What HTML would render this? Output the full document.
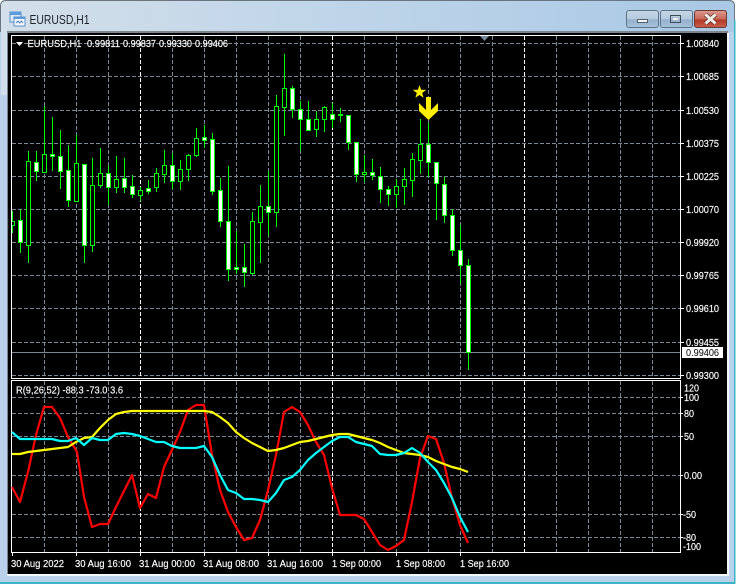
<!DOCTYPE html>
<html><head><meta charset="utf-8"><title>EURUSD,H1</title>
<style>
html,body{margin:0;padding:0;background:#fff;overflow:hidden}
svg{display:block}
text{font-family:"Liberation Sans",sans-serif;font-size:10px;fill:#fff;stroke:#fff;stroke-width:.15}
</style></head><body>
<svg width="738" height="584" viewBox="0 0 738 584" xmlns="http://www.w3.org/2000/svg">
<defs>
<linearGradient id="tb" x1="0" x2="1" y1="0" y2="0"><stop offset="0" stop-color="#d3dfe9"/><stop offset=".45" stop-color="#bfd5e9"/><stop offset="1" stop-color="#a9c8e5"/></linearGradient>
<linearGradient id="btn" x1="0" x2="0" y1="0" y2="1"><stop offset="0" stop-color="#c6d6e6"/><stop offset=".5" stop-color="#b4c9de"/><stop offset=".55" stop-color="#94b0cd"/><stop offset="1" stop-color="#a9c3dc"/></linearGradient>
<linearGradient id="cls" x1="0" x2="0" y1="0" y2="1"><stop offset="0" stop-color="#dc9a8e"/><stop offset=".5" stop-color="#c9685a"/><stop offset=".55" stop-color="#b23a28"/><stop offset="1" stop-color="#c8604a"/></linearGradient>
<clipPath id="mc"><rect x="12" y="36" width="668" height="342"/></clipPath>
</defs>
<rect width="738" height="584" fill="#fff"/>
<path d="M0 584V6Q0 0 6 0H729Q735 0 735 6V584Z" fill="#b9d1ea"/>
<path d="M.5 32V6Q.5 .5 6 .5H729Q734.500 .5 734.500 6V32" fill="url(#tb)" stroke="#6a7580" stroke-width="1"/>
<rect x="1" y="95" width="5" height="480" fill="#b9d1ea"/>
<rect x="1" y="32" width="6" height="63" fill="#d2e0ee"/>
<rect x="729" y="32" width="5" height="550" fill="#b9d1ea"/>
<rect x="0" y="582" width="735" height="2" fill="#3cb4c4"/>
<rect x="734" y="20" width="1.500" height="564" fill="#3cb4c4"/>
<!-- title icon -->
<g shape-rendering="crispEdges">
<rect x="10" y="12" width="11" height="10" fill="#dbe9f7" stroke="#5c8fc7"/>
<rect x="10" y="12" width="11" height="3" fill="#5c9ae0"/>
<rect x="14" y="17" width="11" height="9" fill="#f4f9fe" stroke="#5c8fc7"/>
<rect x="14" y="17" width="11" height="2" fill="#5c9ae0"/>
</g>
<path d="M16 23l2-2 1.500 2 2-2 1.500 2" fill="none" stroke="#4a7fbd" stroke-width="1"/>
<text x="29.500" y="24" textLength="60" lengthAdjust="spacingAndGlyphs" style="font-size:13px;fill:#20262c;stroke:none">EURUSD,H1</text>
<!-- buttons -->
<rect x="626.500" y="10.500" width="32" height="17" rx="2.500" fill="url(#btn)" stroke="#5f7387"/>
<rect x="660.500" y="10.500" width="32" height="17" rx="2.500" fill="url(#btn)" stroke="#5f7387"/>
<rect x="694.500" y="10.500" width="32" height="17" rx="2.500" fill="url(#cls)" stroke="#6b3a34"/>
<rect x="637.500" y="19.500" width="10" height="3" fill="#f2f5f8" stroke="#51606e"/>
<rect x="670.500" y="15.500" width="10" height="7" fill="none" stroke="#3f4d5b"/>
<rect x="672.500" y="17.500" width="6" height="3" fill="#eef2f6" stroke="#8a9aa9" stroke-width=".5"/>
<path d="M705.500 14.500L715.500 23.500M715.500 14.500L705.500 23.500" stroke="#5b2a24" stroke-width="4.500" fill="none"/>
<path d="M705.500 14.500L715.500 23.500M715.500 14.500L705.500 23.500" stroke="#f1ece8" stroke-width="3" fill="none"/>
<!-- canvas -->
<rect x="7" y="31" width="721" height="2" fill="#7d858c"/>
<rect x="7" y="31" width="1" height="544" fill="#7d858c"/>
<rect x="8" y="33" width="719" height="541" fill="#000"/>
<rect x="7" y="574" width="721" height="2" fill="#f4f7fa"/>
<rect x="727" y="33" width="2" height="543" fill="#f4f7fa"/>
<!-- grid -->
<g shape-rendering="crispEdges" fill="none" stroke-dasharray="4 2">
<path stroke="#778899" d="M12 43.500H680M12 76.500H680M12 110.500H680M12 143.500H680M12 176.500H680M12 209.500H680M12 242.500H680M12 275.500H680M12 308.500H680M12 342.500H680M12 375.500H680M12 397.500H680M12 413.500H680M12 436.500H680M12 475.500H680M12 514.500H680M12 537.500H680"/>
<path stroke="#778899" d="M44.500 36V378M76.500 36V378M108.500 36V378M172.500 36V378M204.500 36V378M236.500 36V378M268.500 36V378M300.500 36V378M364.500 36V378M396.500 36V378M428.500 36V378M460.500 36V378M492.500 36V378M556.500 36V378M588.500 36V378M620.500 36V378M652.500 36V378M44.500 381V552M76.500 381V552M108.500 381V552M172.500 381V552M204.500 381V552M236.500 381V552M268.500 381V552M300.500 381V552M364.500 381V552M396.500 381V552M428.500 381V552M460.500 381V552M492.500 381V552M556.500 381V552M588.500 381V552M620.500 381V552M652.500 381V552"/>
<path stroke="#fff" d="M140.500 36V378M332.500 36V378M524.500 36V378M140.500 381V552M332.500 381V552M524.500 381V552"/>
</g>
<path d="M12 352.500H681" stroke="#778899" shape-rendering="crispEdges"/>
<!-- candles -->
<g clip-path="url(#mc)" shape-rendering="crispEdges" stroke="#00ff00" stroke-width="1">
<path fill="none" d="M12.500 211V233M20.500 209V253M28.500 151V263M36.500 151V181M44.500 106V172M52.500 117V171M60.500 130V189M68.500 145V207M76.500 135V202M84.500 164V263M92.500 158V252M100.500 148V188M108.500 166V205M116.500 156V193M124.500 158V193M132.500 175V198M140.500 187V201M148.500 180V194M156.500 168V192M164.500 150V183M172.500 153V189M180.500 160V190M188.500 154V181M196.500 128V157M204.500 125V148M212.500 133V195M220.500 178V227M228.500 166V281M236.500 231V274M244.500 244V287M252.500 212V275M260.500 185V263M268.500 171V236M276.500 95V227M284.500 54V136M292.500 86V118M300.500 101V151M308.500 101V131M316.500 111V137M324.500 106V132M332.500 103V128M340.500 108V122M348.500 115V150M356.500 142V182M364.500 155V182M372.500 159V180M380.500 167V203M388.500 186V206M396.500 179V208M404.500 168V205M412.500 153V197M420.500 119V174M428.500 123V177M436.500 162V220M444.500 177V223M452.500 209V256M460.500 225V284M468.500 259V370"/>
<path fill="#000" d="M10.500 221.500h4v4h-4zM26.500 161.500h4v84h-4zM42.500 154.500h4v18h-4zM74.500 163.500h4v38h-4zM90.500 185.500h4v60h-4zM98.500 173.500h4v12h-4zM114.500 179.500h4v8h-4zM138.500 190.500h4v5h-4zM154.500 173.500h4v14h-4zM162.500 165.500h4v9h-4zM178.500 169.500h4v12h-4zM186.500 155.500h4v14h-4zM194.500 138.500h4v17h-4zM250.500 221.500h4v52h-4zM258.500 206.500h4v16h-4zM274.500 106.500h4v106h-4zM282.500 88.500h4v19h-4zM314.500 119.500h4v10h-4zM322.500 107.500h4v12h-4zM338.500 114.500h4v1h-4zM362.500 172.500h4v2h-4zM394.500 186.500h4v8h-4zM402.500 179.500h4v7h-4zM410.500 159.500h4v21h-4zM418.500 144.500h4v16h-4z"/>
<path fill="#fff" d="M18.500 220.500h4v22h-4zM34.500 162.500h4v9h-4zM50.500 154.500h4v2h-4zM58.500 156.500h4v15h-4zM66.500 170.500h4v30h-4zM82.500 164.500h4v81h-4zM106.500 173.500h4v14h-4zM122.500 178.500h4v9h-4zM130.500 186.500h4v8h-4zM146.500 188.500h4v3h-4zM170.500 165.500h4v16h-4zM202.500 137.500h4v3h-4zM210.500 139.500h4v52h-4zM218.500 190.500h4v31h-4zM226.500 221.500h4v48h-4zM234.500 267.500h4v2h-4zM242.500 267.500h4v5h-4zM266.500 206.500h4v6h-4zM290.500 88.500h4v21h-4zM298.500 109.500h4v10h-4zM306.500 119.500h4v11h-4zM330.500 114.500h4v5h-4zM346.500 115.500h4v27h-4zM354.500 142.500h4v32h-4zM370.500 172.500h4v3h-4zM378.500 176.500h4v13h-4zM386.500 189.500h4v5h-4zM426.500 144.500h4v18h-4zM434.500 162.500h4v21h-4zM442.500 184.500h4v31h-4zM450.500 215.500h4v35h-4zM458.500 250.500h4v15h-4zM466.500 265.500h4v87h-4z"/>
</g>
<!-- objects -->
<polygon points="419.500,85 421.100,89.800 426.200,89.900 422.200,93 423.600,97.800 419.500,95 415.400,97.800 416.800,93 412.800,89.900 417.900,89.800" fill="#ffee00"/>
<polygon points="426,97 431,97 431,110 438,103 438,111 428.500,120 419,111 419,103 426,110" fill="#ffee00"/>
<polygon points="480,36 489,36 484.500,41" fill="#778899"/>
<polygon points="16,42 23,42 19.500,46" fill="#fff"/>
<!-- chart borders -->
<g fill="none" stroke="#fff" shape-rendering="crispEdges">
<rect x="11.500" y="35.500" width="669" height="343"/>
<rect x="11.500" y="380.500" width="669" height="172"/>
<path d="M681 43.500h3M681 76.500h3M681 110.500h3M681 143.500h3M681 176.500h3M681 209.500h3M681 242.500h3M681 275.500h3M681 308.500h3M681 342.500h3M681 375.500h3M681 397.500h2M681 413.500h2M681 436.500h2M681 475.500h2M681 514.500h2M681 537.500h2M12.500 553v3M76.500 553v3M140.500 553v3M204.500 553v3M268.500 553v3M332.500 553v3M396.500 553v3M460.500 553v3"/>
</g>
<!-- indicator lines -->
<g fill="none" stroke-width="2.200" stroke-linejoin="round">
<polyline stroke="#ff0000" points="12,487 20,502 28,472 36,435 44,407 52,407 60,418 68,437 77,452 84,497 92,527 100,524 108,524 116,507 124,491 132,475 140,508 148,494 156,498 164,467 172,450 180,432 188,410 196,405 204,405 212,455 220,490 228,512 236,527 244,540 252,538 260,520 268,490 276,455 284,412 292,407 300,412 308,425 316,442 324,455 332,488 340,515 348,515 356,515 364,519 372,532 380,545 388,550 396,546 404,540 412,502 420,458 428,436 436,439 444,463 452,498 460,525 468,543"/>
<polyline stroke="#ffff00" points="12,454 20,454 28,452 36,451 44,450 52,449 60,448 68,447 76,442 84,438 92,437 100,428 108,420 116,414 124,412 132,411 140,411 204,411 212,412 220,417 228,423 236,432 244,438 252,443 260,447 268,451 276,450 284,448 292,445 300,442 308,441 316,439 324,437 332,435 340,434 348,434 356,436 364,438 372,440 380,443 388,447 396,450 404,453 412,454 420,455 428,457 436,461 444,464 452,467 460,469 468,472"/>
<polyline stroke="#00ffff" points="12,432 20,439 28,439 36,439 44,439 52,439 60,441 68,441 76,438 84,445 92,438 100,440 108,440 116,434 124,433 132,434 140,436 148,439 156,442 164,442 172,446 180,448 188,448 196,448 204,446 212,457 220,475 228,490 236,493 244,499 252,499 260,500 268,502 276,493 284,480 292,477 300,470 308,460 316,453 324,447 332,441 340,437 348,437 356,442 364,444 372,446 380,454 388,455 396,455 404,453 412,448 420,453 428,462 436,470 444,483 452,498 460,517 468,532"/>
</g>
<!-- legend -->
<text x="27.500" y="47" textLength="54" lengthAdjust="spacingAndGlyphs">EURUSD,H1</text>
<text x="87" y="47" textLength="33" lengthAdjust="spacingAndGlyphs">0.99811</text>
<text x="123" y="47" textLength="33" lengthAdjust="spacingAndGlyphs">0.99837</text>
<text x="159" y="47" textLength="33" lengthAdjust="spacingAndGlyphs">0.99330</text>
<text x="195" y="47" textLength="33" lengthAdjust="spacingAndGlyphs">0.99406</text>
<text x="16" y="393.500" textLength="107" lengthAdjust="spacingAndGlyphs">R(9,26,52) -88.3 -73.0 3.6</text>
<!-- price axis -->
<g>
<text x="686" y="47" textLength="33" lengthAdjust="spacingAndGlyphs">1.00840</text>
<text x="686" y="80" textLength="33" lengthAdjust="spacingAndGlyphs">1.00685</text>
<text x="686" y="114" textLength="33" lengthAdjust="spacingAndGlyphs">1.00530</text>
<text x="686" y="147" textLength="33" lengthAdjust="spacingAndGlyphs">1.00375</text>
<text x="686" y="180" textLength="33" lengthAdjust="spacingAndGlyphs">1.00225</text>
<text x="686" y="213" textLength="33" lengthAdjust="spacingAndGlyphs">1.00070</text>
<text x="686" y="246" textLength="33" lengthAdjust="spacingAndGlyphs">0.99920</text>
<text x="686" y="279" textLength="33" lengthAdjust="spacingAndGlyphs">0.99765</text>
<text x="686" y="312" textLength="33" lengthAdjust="spacingAndGlyphs">0.99610</text>
<text x="686" y="346" textLength="33" lengthAdjust="spacingAndGlyphs">0.99455</text>
<text x="686" y="379" textLength="33" lengthAdjust="spacingAndGlyphs">0.99300</text>
<rect x="682" y="347" width="41" height="11" fill="#fff"/>
<text x="686" y="356" textLength="33" lengthAdjust="spacingAndGlyphs" style="fill:#000;stroke:none">0.99406</text>
<text x="684" y="391.500" textLength="15" lengthAdjust="spacingAndGlyphs">120</text>
<text x="684" y="401" textLength="15" lengthAdjust="spacingAndGlyphs">100</text>
<text x="684" y="417" textLength="10" lengthAdjust="spacingAndGlyphs">80</text>
<text x="684" y="440" textLength="10" lengthAdjust="spacingAndGlyphs">50</text>
<text x="684" y="479" textLength="18" lengthAdjust="spacingAndGlyphs">0.00</text>
<text x="683" y="518" textLength="13" lengthAdjust="spacingAndGlyphs">-50</text>
<text x="683" y="541" textLength="13" lengthAdjust="spacingAndGlyphs">-80</text>
<text x="683" y="550" textLength="18" lengthAdjust="spacingAndGlyphs">-100</text>
</g>
<!-- time axis -->
<text x="11" y="567" textLength="53" lengthAdjust="spacingAndGlyphs">30 Aug 2022</text>
<text x="75" y="567" textLength="56" lengthAdjust="spacingAndGlyphs">30 Aug 16:00</text>
<text x="139" y="567" textLength="56" lengthAdjust="spacingAndGlyphs">31 Aug 00:00</text>
<text x="203" y="567" textLength="56" lengthAdjust="spacingAndGlyphs">31 Aug 08:00</text>
<text x="267" y="567" textLength="56" lengthAdjust="spacingAndGlyphs">31 Aug 16:00</text>
<text x="332" y="567" textLength="49" lengthAdjust="spacingAndGlyphs">1 Sep 00:00</text>
<text x="396" y="567" textLength="49" lengthAdjust="spacingAndGlyphs">1 Sep 08:00</text>
<text x="460" y="567" textLength="49" lengthAdjust="spacingAndGlyphs">1 Sep 16:00</text>
</svg>
</body></html>
